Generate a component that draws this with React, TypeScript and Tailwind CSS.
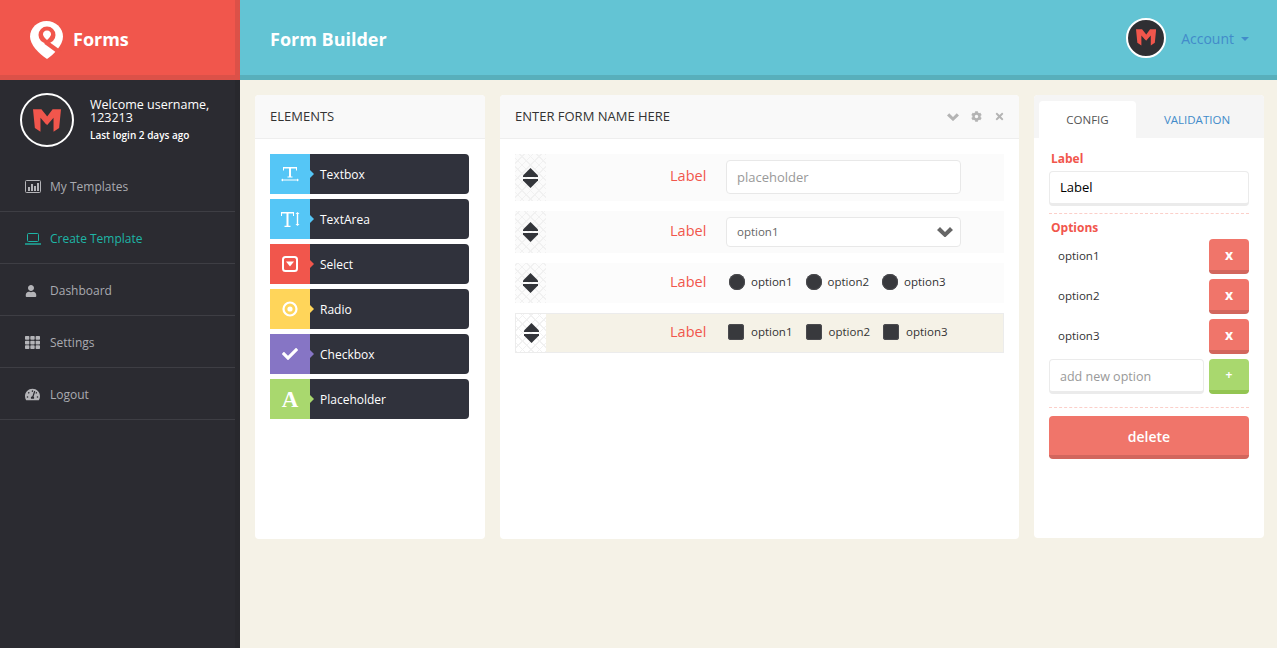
import type { ReactNode } from "react";
import { FaCheck, FaCog, FaTachometerAlt, FaTh, FaTimes, FaUser } from "react-icons/fa";

function MonogramMark({ size, ring }: { size: number; ring: number }) {
  return (
    <div
      className="flex items-center justify-center rounded-full border-white bg-[#2f2f33]"
      style={{ width: size, height: size, borderWidth: ring }}
    >
      <svg viewBox="0 0 30 25" className="h-[56%] w-[56%]" fill="#f1564c">
        <path d="M0 1 H9 L17 11 L14 17 L8 10 V25 L2 21 Z" />
        <path d="M30 1 H21 L12 13 L15 18 L22 10 V25 L28 21 Z" />
      </svg>
    </div>
  );
}

function PinLogo() {
  return (
    <svg viewBox="0 0 33 38" className="h-[38px] w-[33px]">
      <path
        fill="#fff"
        d="M16.5 0 C7.4 0 0 7 0 15.6 C0 23.6 8.5 32.5 17 38 C24 33.5 33 24 33 15.6 C33 7 25.6 0 16.5 0 Z"
      />
      <circle cx="17" cy="14" r="8.5" fill="#f1564c" />
      <path d="M15.5 21 L30 31.5" stroke="#f1564c" strokeWidth="4.5" fill="none" />
      <path fill="#fff" d="M17 9.5 C19.6 9.5 21 11.4 21 13.2 C21 15 18.8 17.4 17 19 C15.2 17.4 13 15 13 13.2 C13 11.4 14.4 9.5 17 9.5 Z" />
    </svg>
  );
}

function TextboxIcon() {
  return (
    <svg viewBox="0 0 18 15" className="h-[15px] w-[18px]" fill="#fff">
      <path d="M2 0 H16 V3.5 H15 V1.5 H10 V9.5 H11.5 V10.5 H6.5 V9.5 H8 V1.5 H3 V3.5 H2 Z" />
      <path d="M0 13 L2 11.5 V12.5 H16 V11.5 L18 13 L16 14.5 V13.5 H2 V14.5 Z" />
    </svg>
  );
}

function TextAreaIcon() {
  return (
    <svg viewBox="0 0 19 17" className="h-[17px] w-[19px]" fill="#fff">
      <path d="M0 1 H13 V5 H12 V2.5 H7.5 V14.8 H9.5 V16 H3.5 V14.8 H5.5 V2.5 H1 V5 H0 Z" />
      <path d="M16.5 1 L18.5 3 H17.2 V13 H18.5 L16.5 15 L14.5 13 H15.8 V3 H14.5 Z" />
    </svg>
  );
}

function SelectIcon() {
  return (
    <svg viewBox="0 0 16 16" className="h-4 w-4" fill="#fff">
      <rect x="1" y="1" width="14" height="14" rx="2.5" fill="none" stroke="#fff" strokeWidth="2" />
      <path d="M4 5.5 H12 L8 10.5 Z" />
    </svg>
  );
}

function RadioIcon() {
  return (
    <svg viewBox="0 0 16 16" className="h-4 w-4" fill="#fff">
      <circle cx="8" cy="8" r="6.5" fill="none" stroke="#fff" strokeWidth="2.2" />
      <circle cx="8" cy="8" r="2.6" />
    </svg>
  );
}

function ChartBoxIcon() {
  return (
    <svg viewBox="0 0 16 13" className="h-[13px] w-4" fill="currentColor">
      <rect x="0.5" y="0.5" width="15" height="12" rx="1" fill="none" stroke="currentColor" />
      <path d="M3 7 H5 V11 H3 Z M6 4 H8 V11 H6 Z M9 6 H11 V11 H9 Z M12 3 H14 V11 H12 Z" />
    </svg>
  );
}

function LaptopIcon() {
  return (
    <svg viewBox="0 0 16 12" className="h-3 w-4" fill="none" stroke="currentColor">
      <rect x="2.5" y="0.5" width="11" height="8" rx="1" />
      <path d="M0 11 H16" strokeWidth="1.4" />
    </svg>
  );
}

function ThickChevron({ className }: { className: string }) {
  return (
    <svg viewBox="0 0 16 10" className={className} fill="currentColor">
      <path d="M0 3 L3 0 L8 5 L13 0 L16 3 L8 10.5 Z" />
    </svg>
  );
}

const navItems = [
  { label: "My Templates", icon: <ChartBoxIcon />, active: false },
  { label: "Create Template", icon: <LaptopIcon />, active: true },
  { label: "Dashboard", icon: <FaUser className="text-[12px]" />, active: false },
  { label: "Settings", icon: <FaTh />, active: false },
  { label: "Logout", icon: <FaTachometerAlt />, active: false },
];

const elements: { label: string; icon: ReactNode; block: string; arrow: string }[] = [
  { label: "Textbox", icon: <TextboxIcon />, block: "bg-[#55c6f6]", arrow: "border-l-[#55c6f6]" },
  { label: "TextArea", icon: <TextAreaIcon />, block: "bg-[#55c6f6]", arrow: "border-l-[#55c6f6]" },
  { label: "Select", icon: <SelectIcon />, block: "bg-[#f1564c]", arrow: "border-l-[#f1564c]" },
  { label: "Radio", icon: <RadioIcon />, block: "bg-[#ffd55a]", arrow: "border-l-[#ffd55a]" },
  { label: "Checkbox", icon: <FaCheck className="text-[16px] text-white" />, block: "bg-[#8675c5]", arrow: "border-l-[#8675c5]" },
  {
    label: "Placeholder",
    icon: <span className="font-['Liberation_Serif',serif] text-[23px] leading-none font-bold text-white">A</span>,
    block: "bg-[#a9d86e]",
    arrow: "border-l-[#a9d86e]",
  },
];

function ElementItem({ item }: { item: (typeof elements)[number] }) {
  return (
    <div className="flex h-10 w-[199px] rounded-r-[4px] bg-[#30323c] text-white">
      <div className={`relative flex w-10 shrink-0 items-center justify-center ${item.block}`}>
        {item.icon}
        <span
          className={`absolute top-1/2 left-full h-0 w-0 -translate-y-1/2 border-y-[4px] border-l-[4px] border-y-transparent ${item.arrow}`}
        />
      </div>
      <span className="pl-[10px] text-[12px] leading-[42px] font-medium">{item.label}</span>
    </div>
  );
}

function DragHandle({ dark }: { dark?: boolean }) {
  return (
    <div
      className={`flex shrink-0 items-center justify-center self-stretch bg-[repeating-linear-gradient(45deg,#f1f1f1_0px,#f1f1f1_1px,transparent_1px,transparent_6px),repeating-linear-gradient(-45deg,#f1f1f1_0px,#f1f1f1_1px,transparent_1px,transparent_6px)] ${dark ? "w-[30px] bg-white" : "w-[31px]"}`}
    >
      <svg viewBox="0 0 15 20" className="h-5 w-[15px]" fill="#33353a">
        <path d="M7.5 0 L15 7.5 V9 H0 V7.5 Z" />
        <path d="M0 11 H15 V12.5 L7.5 20 L0 12.5 Z" />
      </svg>
    </div>
  );
}

function FormRow({
  className,
  children,
  dark,
}: {
  className: string;
  children: ReactNode;
  dark?: boolean;
}) {
  return (
    <div className={`flex items-center ${className}`}>
      <DragHandle dark={dark} />
      <span className="-mt-[3px] ml-[124px] w-[36px] text-[14.5px] text-[#f1564c]">Label</span>
      <div className="ml-[20px] flex w-[235px] items-center">{children}</div>
    </div>
  );
}

function ChoiceGroup({ square }: { square?: boolean }) {
  return (
    <div className={`-mt-[2px] flex items-center text-[11.5px] text-[#333] ${square ? "pl-[2px]" : "pl-[3px]"}`}>
      {["option1", "option2", "option3"].map((opt) => (
        <div key={opt} className="mr-[13px] flex items-center">
          <span
            className={`block h-4 w-4 bg-[#38393d] shadow-[inset_0_0_0_1px_#4a4a4e] ${square ? "mr-[7px] rounded-[3px]" : "mr-[6px] rounded-full"}`}
          />
          {opt}
        </div>
      ))}
    </div>
  );
}

function RemoveButton() {
  return (
    <button className="h-[35px] w-10 rounded-[4px] border-b-[4px] border-[#d2665d] bg-[#f0756a] text-[14px] font-bold text-white">
      x
    </button>
  );
}

export default function App() {
  return (
    <div className="flex min-h-[648px] bg-[#f5f2e7] font-['Open_Sans',sans-serif]">
      <aside className="w-[240px] shrink-0 bg-[#2b2b31]">
        <div className="flex h-20 items-center border-r-[5px] border-b-[5px] border-[#dc5148] bg-[#f1564c] pt-[5px] pl-[30px]">
          <PinLogo />
          <span className="-mt-[2px] ml-[10px] text-[18px] font-bold text-white">Forms</span>
        </div>
        <div className="border-r-[5px] border-[#28282d]">
          <div className="flex h-20 items-center pl-[20px]">
            <MonogramMark size={54} ring={2} />
            <div className="ml-4 text-white">
              <p className="text-[12.5px] leading-[13px] font-medium">
                Welcome username,
                <br />
                123213
              </p>
              <p className="mt-[4px] text-[10px] leading-[14px] font-semibold">Last login 2 days ago</p>
            </div>
          </div>
          {navItems.map((item) => (
            <div
              key={item.label}
              className={`flex h-[52px] items-center border-b border-[#3e3e44] pt-[2px] pl-[25px] text-[12px] ${item.active ? "text-[#1eb5a6]" : "text-[#a9aab0]"}`}
            >
              <span className={`flex w-[25px] items-center text-[15px] ${item.active ? "text-[#1eb5a6]" : "text-[#b4b4b8]"}`}>
                {item.icon}
              </span>
              {item.label}
            </div>
          ))}
          <div className="h-[228px]" />
        </div>
      </aside>

      <div className="min-w-0 flex-1">
        <header className="flex h-20 items-center justify-between border-b-[5px] border-[#58afbb] bg-[#63c4d4] pr-7 pl-[30px]">
          <h1 className="mt-1 text-[18px] font-bold text-white">Form Builder</h1>
          <div className="flex items-center">
            <MonogramMark size={40} ring={2} />
            <span className="mt-[2px] ml-[15px] text-[14px] text-[#428bca]">Account</span>
            <span className="mt-[3px] ml-[7px] h-0 w-0 border-x-[4px] border-t-[4px] border-x-transparent border-t-[#428bca]" />
          </div>
        </header>

        <main className="flex gap-[15px] py-[15px] pr-[13px] pl-[15px]">
          <section className="h-[444px] w-[230px] shrink-0 overflow-hidden rounded-[4px] bg-white">
            <div className="flex h-[44px] items-center border-b border-[#eeeeee] bg-[#f9f9f9] pl-[15px] text-[13px] text-[#333]">
              ELEMENTS
            </div>
            <div className="flex flex-col gap-[5px] px-[15px] pt-[15px]">
              {elements.map((item) => (
                <ElementItem key={item.label} item={item} />
              ))}
            </div>
          </section>

          <section className="h-[444px] w-[519px] shrink-0 overflow-hidden rounded-[4px] bg-white">
            <div className="flex h-[44px] items-center justify-between border-b border-[#eeeeee] bg-[#f9f9f9] pr-[14px] pl-[15px] text-[13px] text-[#333]">
              ENTER FORM NAME HERE
              <div className="flex items-center gap-[12px] text-[#b4b4b4]">
                <ThickChevron className="h-2 w-3" />
                <FaCog className="text-[11px]" />
                <FaTimes className="text-[11px]" />
              </div>
            </div>
            <div className="px-[15px] pt-[15px]">
              <FormRow className="h-[47px] bg-[#fbfbfb]">
                <div className="-mt-[1px] flex h-[34px] w-full items-center rounded-[4px] border border-[#e8e8e8] bg-white pt-[2px] pl-[10px] text-[13px] text-[#999]">
                  placeholder
                </div>
              </FormRow>
              <FormRow className="mt-[10px] h-[42px] bg-[#fbfbfb]">
                <div className="flex h-[30px] w-full items-center justify-between rounded-[4px] border border-[#e8e8e8] bg-white pr-[7px] pl-[10px] text-[11.5px] text-[#666]">
                  option1
                  <ThickChevron className="h-[10px] w-4 text-[#666]" />
                </div>
              </FormRow>
              <FormRow className="mt-[10px] h-[40px] bg-[#fcfcfc]">
                <ChoiceGroup />
              </FormRow>
              <FormRow className="mt-[10px] h-[40px] border border-[#ececec] bg-[#f5f2e7]" dark>
                <ChoiceGroup square />
              </FormRow>
            </div>
          </section>

          <section className="h-[443px] w-[230px] shrink-0 overflow-hidden rounded-[4px] bg-white">
            <div className="flex h-[43px] items-end bg-[#f5f5f5] pl-[5px] text-[11.5px]">
              <div className="flex h-[37px] w-[97px] items-center justify-center rounded-t-[4px] bg-white text-[#555]">
                CONFIG
              </div>
              <div className="flex h-[37px] w-[122px] items-center justify-center text-[#428bca]">VALIDATION</div>
            </div>
            <div className="px-[15px] pt-[13px]">
              <p className="pl-[2px] text-[12px] leading-[16px] font-bold text-[#f1564c]">Label</p>
              <div className="mt-1 flex h-[35px] items-center rounded-[4px] border border-b-[3px] border-[#ebebeb] bg-white pl-[10px] text-[13px] text-black">
                Label
              </div>
              <div className="mt-[7px] border-t border-dashed border-[#fbcfc9]" />
              <p className="mt-[6px] pl-[2px] text-[12px] leading-[16px] font-bold text-[#f1564c]">Options</p>
              <div className="mt-[3px] flex flex-col gap-[5px]">
                {["option1", "option2", "option3"].map((opt) => (
                  <div key={opt} className="flex h-[35px] items-center justify-between pl-[9px] text-[11.5px] text-[#333]">
                    <span className="-mt-[2px]">{opt}</span>
                    <RemoveButton />
                  </div>
                ))}
                <div className="flex h-[35px] justify-between">
                  <div className="flex w-[155px] items-center rounded-[4px] border border-b-[3px] border-[#ebebeb] bg-white pt-[4px] pl-[10px] text-[12.5px] text-[#999]">
                    add new option
                  </div>
                  <button className="w-10 rounded-[4px] border-b-[4px] border-[#93c552] bg-[#a9d86e] text-[12px] font-bold text-white">
                    +
                  </button>
                </div>
              </div>
              <div className="mt-[13px] border-t border-dashed border-[#fbcfc9]" />
              <button className="mt-2 h-[43px] w-full rounded-[4px] border-b-[4px] border-[#d2665d] bg-[#f0756a] pt-[2px] text-[14px] font-semibold text-white">
                delete
              </button>
            </div>
          </section>
        </main>
      </div>
    </div>
  );
}
